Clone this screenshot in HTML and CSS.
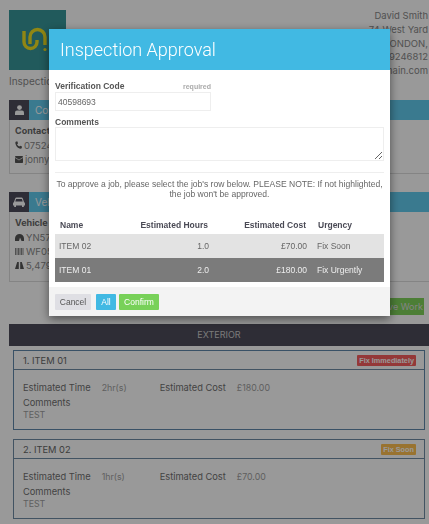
FILE: index.html
```html
<!DOCTYPE html>
<html lang="en">

<head>
    <meta charset="UTF-8">
    <meta name="viewport" content="width=device-width, initial-scale=1.0">
    <title>Inspection Approval</title>
    <link rel="stylesheet" href="styles.css">
</head>

<body>
    <div class="page">
        <div class="top">
            <div class="brand">
                <div class="logo">
                    <svg width="57" height="60" viewBox="0 0 57 60">
                        <path d="M15 21v11a6.500 6.500 0 0 0 13 0v-2" fill="none" stroke="#f0e020" stroke-width="3.400"/>
                        <path d="M21 34V27a7.500 7.500 0 0 1 15 0v8" fill="none" stroke="#f0e020" stroke-width="3.400"/>
                        <circle cx="36" cy="39.500" r="1.600" fill="#f0e020"/>
                    </svg>
                </div>
                <div class="brand-title">Inspection Report</div>
            </div>
            <div class="address">
                <div>David Smith</div>
                <div>74 West Yard</div>
                <div>LONDON,</div>
                <div>07539246812</div>
                <div>info@domain.com</div>
            </div>
        </div>

        <div class="panel contact">
            <div class="panel-head">
                <span class="panel-icon">
                    <svg width="9" height="10" viewBox="0 0 9 10"><circle cx="4.500" cy="2.600" r="2.400" fill="#fff"/><path d="M0 10V7.500Q0 5.500 2 5.500H7Q9 5.500 9 7.500V10Z" fill="#fff"/></svg>
                </span>
                <span class="panel-title">Contact Details</span>
            </div>
            <div class="panel-body">
                <div class="panel-name">Contact Details</div>
                <div class="panel-line">
                    <svg width="7" height="8" viewBox="0 0 7 8"><path d="M1 0.500 2.500 0.500 3 2.500 2 3.300Q3 5 4.300 5.600L5.200 4.700 7 5.500 6.700 7.300Q6 8 4.500 7.600 1 6 0.300 2 0.200 1 1 0.500Z" fill="#555"/></svg>
                    07524 000000
                </div>
                <div class="panel-line">
                    <svg width="8" height="7" viewBox="0 0 8 7"><rect width="8" height="7" rx="0.800" fill="#555"/><path d="M0 1.500 4 4 8 1.500" fill="none" stroke="#fff" stroke-width="0.700"/></svg>
                    jonny@domain.com
                </div>
            </div>
        </div>

        <div class="panel vehicle">
            <div class="panel-head">
                <span class="panel-icon">
                    <svg width="12" height="10" viewBox="0 0 12 10"><path d="M1 5 2.200 1.500Q2.500 0.500 3.500 0.500H8.500Q9.500 0.500 9.800 1.500L11 5Q12 5.500 12 6.500V8.500H10.800V10H9V8.500H3V10H1.200V8.500H0V6.500Q0 5.500 1 5Z" fill="#fff"/><path d="M2.300 4.600 3.100 2H8.900L9.700 4.600Z" fill="#4d4b5a"/></svg>
                </span>
                <span class="panel-title">Vehicle Details</span>
            </div>
            <div class="panel-body">
                <div class="panel-name">Vehicle Details</div>
                <div class="panel-line">
                    <svg width="9" height="7" viewBox="0 0 9 7"><path d="M0 7V4.500a4.500 4.500 0 0 1 9 0V7H6.500L5 3.500 4 7Z" fill="#555"/></svg>
                    YN57 ABC
                </div>
                <div class="panel-line">
                    <svg width="9" height="7" viewBox="0 0 9 7"><path d="M0.500 0v7M2 0v7M3.500 0v7M5 0v7M6.500 0v7M8 0v7" stroke="#888" stroke-width="1"/></svg>
                    WF05 DEF
                </div>
                <div class="panel-line">
                    <svg width="9" height="7" viewBox="0 0 9 7"><path d="M2.200 0H3.800V7H0ZM5.200 0H6.800L9 7H5.200Z" fill="#555"/></svg>
                    5,479 Miles
                </div>
            </div>
            <div class="panel-actions">
                <button class="approve-work">Approve Work</button>
            </div>
        </div>

        <div class="section-bar">EXTERIOR</div>

        <div class="card urgent">
            <div class="card-head">
                <span>1. ITEM 01</span>
                <span class="badge badge-red">Fix Immediately</span>
            </div>
            <div class="card-body">
                <div class="stats">
                    <span class="stat-label">Estimated Time</span>
                    <span class="stat-value">2hr(s)</span>
                    <span class="stat-label">Estimated Cost</span>
                    <span class="stat-value">£180.00</span>
                </div>
                <div class="stat-label">Comments</div>
                <div class="stat-value">TEST</div>
            </div>
        </div>

        <div class="card">
            <div class="card-head">
                <span>2. ITEM 02</span>
                <span class="badge badge-amber">Fix Soon</span>
            </div>
            <div class="card-body">
                <div class="stats">
                    <span class="stat-label">Estimated Time</span>
                    <span class="stat-value">1hr(s)</span>
                    <span class="stat-label">Estimated Cost</span>
                    <span class="stat-value">£70.00</span>
                </div>
                <div class="stat-label">Comments</div>
                <div class="stat-value">TEST</div>
            </div>
        </div>
    </div>

    <div class="overlay">
        <div class="modal">
            <div class="modal-header">Inspection Approval</div>
            <div class="modal-body">
                <div class="code-field">
                    <div class="label-row">
                        <label>Verification Code</label>
                        <span class="required">required</span>
                    </div>
                    <input type="text" value="40598693">
                </div>
                <label class="comments-label">Comments</label>
                <textarea></textarea>
                <hr>
                <p class="note">To approve a job, please select the job's row below. PLEASE NOTE: If not highlighted, the job won't be approved.</p>
                <table>
                    <thead>
                        <tr>
                            <th class="col-name">Name</th>
                            <th class="col-hours num">Estimated Hours</th>
                            <th class="col-cost num">Estimated Cost</th>
                            <th class="col-urgency">Urgency</th>
                        </tr>
                    </thead>
                    <tbody>
                        <tr>
                            <td>ITEM 02</td>
                            <td class="num">1.0</td>
                            <td class="num">£70.00</td>
                            <td class="urgency">Fix Soon</td>
                        </tr>
                        <tr class="selected">
                            <td>ITEM 01</td>
                            <td class="num">2.0</td>
                            <td class="num">£180.00</td>
                            <td class="urgency">Fix Urgently</td>
                        </tr>
                    </tbody>
                </table>
            </div>
            <div class="modal-footer">
                <button class="btn btn-cancel">Cancel</button>
                <button class="btn btn-all">All</button>
                <button class="btn btn-confirm">Confirm</button>
            </div>
        </div>
    </div>
</body>

</html>
```

FILE: styles.css
```css
html,
body {
    margin: 0;
    height: 100%;
    overflow: hidden;
}

body {
    font-family: Inter, "Open Sans", sans-serif;
    background-color: #fff;
    color: #777;
}

.page {
    padding: 10px 0 0 9px;
    font-size: 9px;
}

.top {
    display: flex;
    justify-content: space-between;
    height: 90px;
}

.logo {
    width: 57px;
    height: 60px;
    background-color: #379699;
}

.logo svg {
    display: block;
}

.brand-title {
    margin-top: 5px;
    font-size: 10px;
    color: #888;
    white-space: nowrap;
}

.address {
    padding: 0 1px 0 0;
    margin-top: -1px;
    text-align: right;
    font-size: 9.500px;
    line-height: 13.800px;
    color: #888;
}

.panel {
    border: 1px solid #ddd;
    border-right: none;
}

.contact {
    height: 72px;
    margin-bottom: 18px;
}

.vehicle {
    position: relative;
    height: 88px;
    margin-bottom: 42px;
}

.panel-head {
    display: flex;
    height: 20px;
    margin: -1px 0 0 -1px;
}

.panel-icon {
    display: flex;
    align-items: center;
    justify-content: center;
    width: 20px;
    background-color: #4d4b5a;
}

.panel-title {
    flex: 1;
    padding: 4px 6px;
    background-color: #62cbee;
    color: #fff;
    font-size: 10px;
}

.panel-body {
    padding: 4px 5px;
    white-space: nowrap;
}

.panel-name {
    font-weight: 700;
    line-height: 13px;
    margin-bottom: 1px;
    color: #666;
}

.panel-line {
    display: flex;
    align-items: center;
    gap: 2px;
    height: 14px;
    color: #888;
    font-size: 9.500px;
}

.panel-actions {
    position: absolute;
    right: 5px;
    bottom: -34px;
}

.approve-work {
    display: block;
    width: 80px;
    height: 17px;
    padding: 0 1px 0 0;
    border: none;
    background-color: #7fd25a;
    color: #ddd;
    font: 9px Inter, sans-serif;
    text-align: right;
}

.section-bar {
    height: 22px;
    line-height: 22px;
    background-color: #4d4b5a;
    color: #ccc;
    text-align: center;
    font-size: 9px;
}

.card {
    margin: 4px 4px 9px;
    height: 78px;
    border: 1px solid #6f8ba3;
    font-size: 9.300px;
}

.card.urgent {
    border-color: #5f88ab;
}

.card-head {
    display: flex;
    align-items: center;
    justify-content: space-between;
    height: 18px;
    padding: 0 8px 0 9px;
    border-bottom: 1px solid #6f8ba3;
    color: #666;
}

.badge {
    padding: 0 2px;
    height: 11px;
    color: #fff;
    font: 700 7.300px/11px "Liberation Sans", sans-serif;
    border-radius: 1px;
}

.badge-red {
    background-color: #f75e5e;
}

.badge-amber {
    background-color: #ffc050;
}

.card-body {
    padding: 12px 9px 0;
    line-height: 12px;
}

.stats {
    display: flex;
    margin-bottom: 3px;
}

.stat-label {
    color: #707070;
}

.stat-value {
    color: #a0a0a0;
    font-size: 8.800px;
}

.stats .stat-value {
    margin-left: 11px;
    width: 58px;
}

.overlay {
    position: fixed;
    inset: 0;
    background-color: rgba(0, 0, 0, 0.4);
}

.modal {
    width: 341px;
    margin: 29px 0 0 49px;
    background-color: #fff;
    box-shadow: 0 3px 9px rgba(0, 0, 0, 0.5);
    font-family: "Liberation Sans", Arial, sans-serif;
}

.modal-header {
    height: 41px;
    padding-left: 11px;
    background-color: #41b9e3;
    color: #fff;
    font: 300 18px/41px Roboto, sans-serif;
}

.modal-body {
    padding: 11px 6px 5px;
}

.code-field {
    width: 156px;
}

.label-row {
    display: flex;
    align-items: baseline;
    justify-content: space-between;
    height: 11px;
}

label {
    display: block;
    font-size: 8.500px;
    font-weight: 700;
    color: #555;
}

.required {
    font-size: 7px;
    font-weight: 700;
    color: #aaa;
}

input {
    display: block;
    box-sizing: border-box;
    width: 156px;
    height: 19px;
    padding: 0 2px;
    border: 1px solid #eee;
    font: 8.500px "Liberation Sans", sans-serif;
    color: #666;
    outline: none;
}

.comments-label {
    margin-top: 6px;
    height: 10px;
    line-height: 10px;
}

textarea {
    display: block;
    box-sizing: border-box;
    width: 329px;
    height: 34px;
    border: 1px solid #eee;
    outline: none;
}

hr {
    margin: 11px 0 0;
    border: none;
    border-top: 1px solid #eee;
}

.note {
    margin: 6px 0 0;
    font-size: 8.550px;
    line-height: 10px;
    text-align: center;
    color: #666;
}

table {
    width: 329px;
    margin-top: 17px;
    border-collapse: collapse;
    table-layout: fixed;
    font-size: 8.500px;
}

th {
    box-sizing: border-box;
    height: 18px;
    padding: 0 5px;
    text-align: left;
    color: #4a4a55;
}

td {
    box-sizing: border-box;
    height: 24px;
    padding: 0 4px;
    background-color: #e3e3e3;
    color: #666;
}

.selected td {
    background-color: #7b7b7b;
    color: #eee;
}

th.num,
td.num {
    text-align: right;
}

.col-name {
    width: 80px;
}

.col-hours {
    width: 78px;
}

.col-cost {
    width: 98px;
}

.col-urgency {
    padding-left: 7px;
}

td.urgency {
    padding-left: 6px;
    white-space: nowrap;
}

.modal-footer {
    display: flex;
    height: 29px;
    align-items: flex-start;
    box-sizing: border-box;
    padding: 7px 6px 0;
    background-color: #f3f3f3;
}

.btn {
    height: 16px;
    padding: 0;
    border: none;
    border-radius: 1px;
    font: 8.500px "Liberation Sans", sans-serif;
    color: #fff;
}

.btn-cancel {
    width: 36px;
    margin-right: 5px;
    background-color: #dfdfe4;
    color: #555;
}

.btn-all {
    width: 20px;
    margin-right: 3px;
    background-color: #41b9e3;
}

.btn-confirm {
    width: 40px;
    background-color: #78d159;
}
```
